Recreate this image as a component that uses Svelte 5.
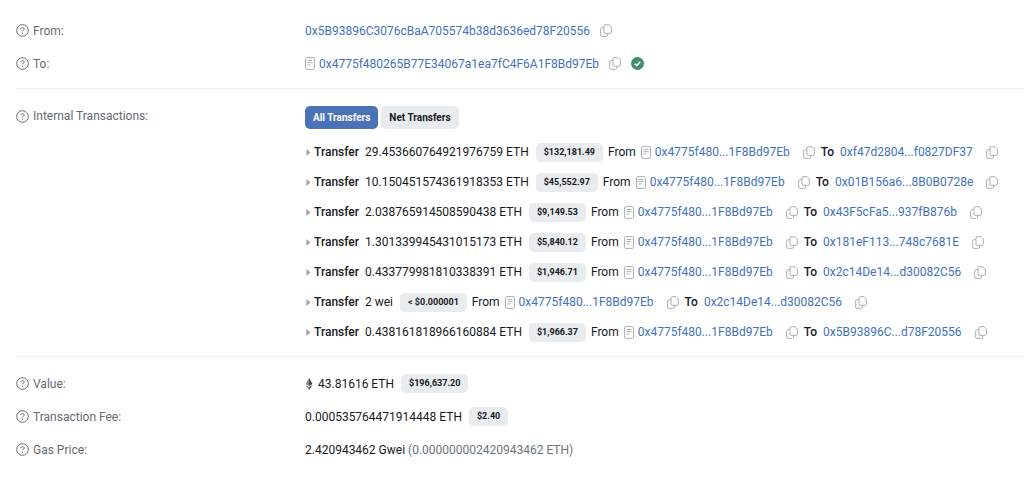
<script lang="ts">
	type Transfer = { amount: string; usd: string; to: string };

	const from = '0x5B93896C3076cBaA705574b38d3636ed78F20556';
	const contract = '0x4775f480265B77E34067a1ea7fC4F6A1F8Bd97Eb';
	const contractShort = '0x4775f480...1F8Bd97Eb';

	const transfers: Transfer[] = [
		{ amount: '29.453660764921976759 ETH', usd: '$132,181.49', to: '0xf47d2804...f0827DF37' },
		{ amount: '10.150451574361918353 ETH', usd: '$45,552.97', to: '0x01B156a6...8B0B0728e' },
		{ amount: '2.038765914508590438 ETH', usd: '$9,149.53', to: '0x43F5cFa5...937fB876b' },
		{ amount: '1.301339945431015173 ETH', usd: '$5,840.12', to: '0x181eF113...748c7681E' },
		{ amount: '0.433779981810338391 ETH', usd: '$1,946.71', to: '0x2c14De14...d30082C56' },
		{ amount: '2 wei', usd: '< $0.000001', to: '0x2c14De14...d30082C56' },
		{ amount: '0.438161818966160884 ETH', usd: '$1,966.37', to: '0x5B93896C...d78F20556' }
	];

	let view = $state('all');

	function copy(text: string) {
		navigator.clipboard?.writeText(text);
	}
</script>

{#snippet label(text: string)}
	<dt>
		<svg class="help" viewBox="0 0 13 13" aria-hidden="true">
			<circle cx="6.5" cy="6.5" r="5.8" />
			<path d="M4.8 5.100c.2-1 .8-1.400 1.700-1.400 1 0 1.700.5 1.700 1.400 0 1.100-1.700 1.100-1.700 2.200" />
			<path d="M6.500 8.500v1.200" />
		</svg>
		{text}
	</dt>
{/snippet}

{#snippet copyButton(text: string)}
	<button class="copy" aria-label="Copy {text}" onclick={() => copy(text)}>
		<svg viewBox="0 0 12 13" aria-hidden="true">
			<path d="M5 .7h4l2.300 2.300v5.300a1 1 0 0 1-1 1H5a1 1 0 0 1-1-1V1.700a1 1 0 0 1 1-1z" />
			<path d="M4 3.700H1.700a1 1 0 0 0-1 1v6.600a1 1 0 0 0 1 1h4.800a1 1 0 0 0 1-1V9.300" />
		</svg>
	</button>
{/snippet}

{#snippet docIcon()}
	<svg class="doc" viewBox="0 0 10 13" aria-hidden="true">
		<rect x=".6" y=".6" width="8.800" height="11.800" rx="1" />
		<path d="M2.600 3.500h4.800M2.600 5.700h4.800M2.600 7.900h2.800" />
	</svg>
{/snippet}

<main>
	<dl class="parties">
		<div class="row">
			{@render label('From:')}
			<dd>
				<a href="#{from}">{from}</a>
				{@render copyButton(from)}
			</dd>
		</div>
		<div class="row">
			{@render label('To:')}
			<dd>
				{@render docIcon()}
				<a href="#{contract}">{contract}</a>
				{@render copyButton(contract)}
				<svg class="check" viewBox="0 0 12 12" role="img" aria-label="Success">
					<circle cx="6" cy="6" r="6" />
					<path d="M3.500 6.200l1.800 1.700 3.200-3.400" />
				</svg>
			</dd>
		</div>
	</dl>

	<dl class="internal">
		<div class="row">
			{@render label('Internal Transactions:')}
			<dd class="stack">
				<div class="tabs">
					<button class:active={view === 'all'} onclick={() => (view = 'all')}>All Transfers</button>
					<button class:active={view === 'net'} onclick={() => (view = 'net')}>Net Transfers</button>
				</div>
				<ul>
					{#each transfers as t}
						<li>
							<svg class="caret" viewBox="0 0 5 8" aria-hidden="true"><path d="M0 0l5 4-5 4z" /></svg>
							<b>Transfer</b>
							<span>{t.amount}</span>
							<span class="badge">{t.usd}</span>
							<span>From</span>
							{@render docIcon()}
							<a href="#{contract}">{contractShort}</a>
							{@render copyButton(contractShort)}
							<b>To</b>
							<a href="#{t.to}">{t.to}</a>
							{@render copyButton(t.to)}
						</li>
					{/each}
				</ul>
			</dd>
		</div>
	</dl>

	<dl class="totals">
		<div class="row">
			{@render label('Value:')}
			<dd>
				<svg class="eth" viewBox="0 0 8 12" aria-hidden="true">
					<path fill="#8a8d91" d="M4 0L.5 6 4 8z" />
					<path fill="#45484c" d="M4 0l3.500 6L4 8z" />
					<path fill="#8a8d91" d="M.5 7L4 12V9z" />
					<path fill="#45484c" d="M7.500 7L4 12V9z" />
				</svg>
				<span>43.81616 ETH</span>
				<span class="badge">$196,637.20</span>
			</dd>
		</div>
		<div class="row">
			{@render label('Transaction Fee:')}
			<dd>
				<span>0.000535764471914448 ETH</span>
				<span class="badge">$2.40</span>
			</dd>
		</div>
		<div class="row">
			{@render label('Gas Price:')}
			<dd>
				<span>2.420943462 Gwei <span class="muted">(0.000000002420943462 ETH)</span></span>
			</dd>
		</div>
	</dl>
</main>

<style>
	:global(body) {
		margin: 0;
		background: #fff;
	}

	main {
		padding: 14px 0 14px 16px;
		font-family: Roboto, 'Liberation Sans', sans-serif;
		font-size: 12px;
		line-height: 20px;
		color: #16191c;
	}

	dl,
	dd,
	ul {
		margin: 0;
		padding: 0;
	}

	dl + dl {
		border-top: 1px solid #eceef0;
	}

	.row {
		display: grid;
		grid-template-columns: 289px 1fr;
		min-height: 33px;
		align-items: center;
	}

	.parties {
		padding-bottom: 8px;
	}

	.internal {
		padding: 17px 0 9px;
	}

	.internal .row {
		align-items: start;
	}

	.totals {
		padding-top: 10px;
	}

	dt,
	dd,
	li,
	.tabs {
		display: flex;
		align-items: center;
		white-space: nowrap;
	}

	dt {
		gap: 4px;
		color: #646b72;
	}

	.stack {
		flex-direction: column;
		align-items: flex-start;
	}

	.tabs {
		gap: 3px;
		padding-bottom: 8px;
	}

	.tabs button {
		height: 23px;
		padding: 0 8px;
		border: 0;
		border-radius: 5px;
		background: #e9ecef;
		color: #16191c;
		font: 700 10px Roboto, 'Liberation Sans', sans-serif;
		cursor: pointer;
	}

	.tabs button.active {
		background: #4a72b8;
		color: #fff;
	}

	ul {
		list-style: none;
	}

	li {
		height: 30px;
	}

	b {
		font-weight: 500;
		margin-right: 6px;
	}

	a {
		color: #4372ba;
		text-decoration: none;
	}

	.badge {
		margin: 0 5px 0 7px;
		padding: 0 8px;
		border-radius: 5px;
		background: #e9ecef;
		font-size: 9px;
		font-weight: 700;
		line-height: 19px;
	}

	.muted {
		color: #6c757d;
	}

	svg {
		flex: none;
		fill: none;
	}

	.help {
		width: 13px;
		height: 13px;
		stroke: #646b72;
	}

	.copy {
		display: flex;
		margin: 0 0 0 10px;
		padding: 0;
		border: 0;
		background: none;
		cursor: pointer;
	}

	.copy svg {
		width: 12px;
		height: 13px;
		stroke: #a9aeb4;
	}

	li .copy {
		margin: 0 6px 0 13px;
	}

	.doc {
		width: 10px;
		height: 13px;
		margin-right: 4px;
		stroke: #a9aeb4;
	}

	li .doc {
		margin-left: 5px;
	}

	.check {
		width: 13px;
		height: 13px;
		margin-left: 10px;
	}

	.check circle {
		fill: #3f8f6b;
	}

	.check path {
		stroke: #fff;
		stroke-width: 1.5;
	}

	.caret {
		width: 5px;
		height: 7px;
		margin: 0 3px 0 1px;
		fill: #a3a8ad;
	}

	.eth {
		width: 8px;
		height: 12px;
		margin-right: 5px;
	}
</style>
